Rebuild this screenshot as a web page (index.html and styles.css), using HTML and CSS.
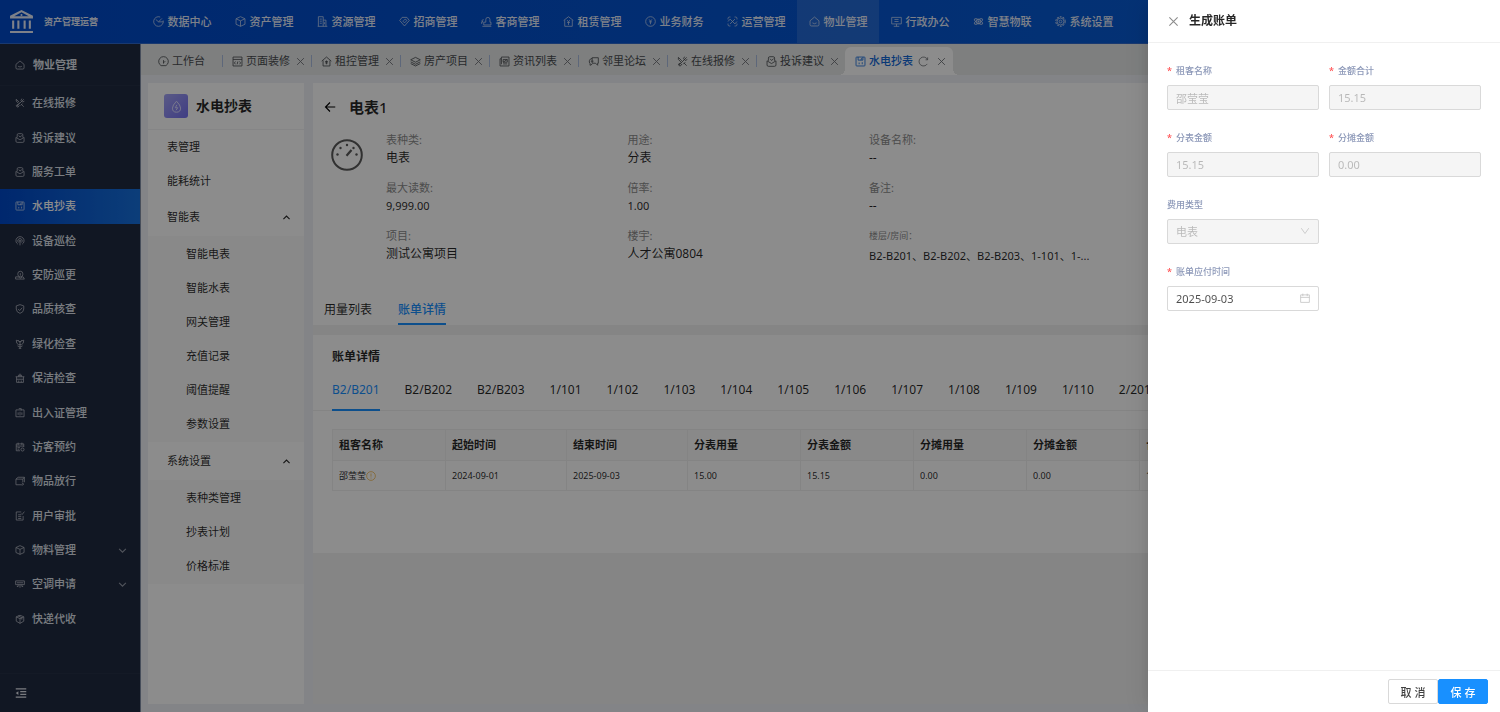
FILE: index.html
```html
<!DOCTYPE html>
<html lang="zh-CN">
<head>
    <meta charset="UTF-8">
    <meta name="viewport" content="width=device-width, initial-scale=1.0">
    <title>水电抄表</title>
    <link rel="stylesheet" href="styles.css">
</head>
<body>
    <!-- icon set -->
    <svg class="sprite" aria-hidden="true">
        <symbol id="i-data" viewBox="0 0 16 16"><path d="M10.500 1.500A7 7 0 1 0 14.800 6.500M8 8.500L4 5M8 8.500h7M8 8.500l5-5"/></symbol>
        <symbol id="i-cube" viewBox="0 0 16 16"><path d="M8 1l6.500 3v8L8 15l-6.500-3V4zM1.500 4L8 7l6.500-3M8 7v8"/></symbol>
        <symbol id="i-building" viewBox="0 0 16 16"><path d="M2 15V1h7v14M9 6h4v9M1 15h14M4 4.500h3M4 7.500h3M4 10.500h3M11 9v3"/></symbol>
        <symbol id="i-tag" viewBox="0 0 16 16"><path d="M4.500 2h7L15 6.500 8 14.500 1 6.500zM5 7l3 3 3.500-3.500L9 4.500 6.500 7"/></symbol>
        <symbol id="i-stamp" viewBox="0 0 16 16"><path d="M7 9V5a3 3 0 1 1 6 0v4h1.500v4H4V9zM2 15h13M4 5.500H3a1.500 1.500 0 0 0 0 3H1v3"/></symbol>
        <symbol id="i-rent" viewBox="0 0 16 16"><path d="M1 6.500L8 1l7 5.500M2.500 6v9h11V6M6 6l2 2.500L10 6M8 8.500V13M6 9.500h4"/></symbol>
        <symbol id="i-coin" viewBox="0 0 16 16"><circle cx="8" cy="8" r="7"/><path d="M6 5l2 2.500L10 5M8 7.500V12M6 8.500h4"/></symbol>
        <symbol id="i-ops" viewBox="0 0 16 16"><path d="M1.500 5V3.500a2 2 0 0 1 2-2H5M11 1.500h1.500a2 2 0 0 1 2 2V5M14.500 11v1.500a2 2 0 0 1-2 2H11M5 14.500H3.500a2 2 0 0 1-2-2V11M1.500 8l3-3.500L11.500 11.500l3-3.500M4.500 11.500l7-7"/></symbol>
        <symbol id="i-home" viewBox="0 0 16 16"><path d="M1.500 7L8 1.500 14.500 7v5.500a2 2 0 0 1-2 2h-9a2 2 0 0 1-2-2zM5 10q3 2.500 6 0"/></symbol>
        <symbol id="i-monitor" viewBox="0 0 16 16"><path d="M1 2h14v9.500H1zM8 11.500V15M4 15h8M5 5h6M5 8h6"/></symbol>
        <symbol id="i-atom" viewBox="0 0 16 16"><ellipse cx="8" cy="8" rx="7" ry="2.500" transform="rotate(30 8 8)"/><ellipse cx="8" cy="8" rx="7" ry="2.500" transform="rotate(150 8 8)"/><circle cx="8" cy="8" r="3.500"/><circle class="solid" cx="8" cy="8" r="1.500"/></symbol>
        <symbol id="i-gear" viewBox="0 0 16 16"><circle cx="8" cy="8" r="6.800" stroke-width="1.500" stroke-dasharray="2.800 1.500"/><circle cx="8" cy="8" r="5"/><circle cx="8" cy="8" r="2"/></symbol>
        <symbol id="i-tools" viewBox="0 0 16 16"><path d="M2 2l5 5M10 10l4 4M9 12l3-3M14 2L3 13M2 2v3l4 4M11 1l-1.500 3L12 6.500 15 5M5 10l-3 2 1 2 2 .5 2-3"/></symbol>
        <symbol id="i-mail" viewBox="0 0 16 16"><path d="M3.500 7V3a2 2 0 0 1 2-2h5a2 2 0 0 1 2 2v4M1.500 7v6a2 2 0 0 0 2 2h9a2 2 0 0 0 2-2V7L8 11zM6 4l2 2.500L11 4"/></symbol>
        <symbol id="i-meter" viewBox="0 0 16 16"><rect x="1.500" y="1.500" width="13" height="13" rx="1"/><path d="M4.500 1.500V6h7V1.500M8.500 6L10 3M6 9.500V12M10.500 9v3"/></symbol>
        <symbol id="i-device" viewBox="0 0 16 16"><path d="M4.500 13a6.500 6.500 0 1 1 7 0M8 8v7M6 10.500a3.500 3.500 0 1 1 4 0"/><circle cx="8" cy="7.500" r="1"/></symbol>
        <symbol id="i-guard" viewBox="0 0 16 16"><path d="M4.500 6a4 4 0 1 1 8 0v1a4 4 0 0 1-8 0zM8.500 5v4M1 11h4l3.500 2L12 11h1l2 3.500H1z"/></symbol>
        <symbol id="i-shield" viewBox="0 0 16 16"><path d="M8 1l6 2v5q0 5-6 7-6-2-6-7V3zM5 8l2.500 2.500L11.500 6"/></symbol>
        <symbol id="i-flower" viewBox="0 0 16 16"><path d="M2 2q3 0 6 3 3-3 6-3 0 6-3.500 7h-5Q2 8 2 2zM5 2l3 3 3-3M8 5v10M8 13l-4-2M8 13l4-2M6 15h4"/></symbol>
        <symbol id="i-clean" viewBox="0 0 16 16"><path d="M8 1v5M5.500 3.500h5V6M5.500 3.500V6M1 6h14M2.500 6v9h11V6M2.500 10h11M6 12v3M10 12v3"/></symbol>
        <symbol id="i-card" viewBox="0 0 16 16"><path d="M1.500 3h13v11h-13zM6 1h4v3M5 7v4M8 6v6M11 7v4"/></symbol>
        <symbol id="i-visit" viewBox="0 0 16 16"><path d="M8 14H2V3h12v5M2 6.500h12M5 1v4M11 1v4M4 9h4M4 11.500h3"/><circle cx="12" cy="12" r="2.500"/></symbol>
        <symbol id="i-goods" viewBox="0 0 16 16"><path d="M11 14H1.500V5h11v5M1.500 5L5 2h10v8M12.500 5L15 2M11 11l3 2-3 2"/></symbol>
        <symbol id="i-doc" viewBox="0 0 16 16"><path d="M10 1.500H2v13h11V8M5 6h5M5 9h5M5 12h5M10 4l1.500 1.500L15 1"/></symbol>
        <symbol id="i-ac" viewBox="0 0 16 16"><path d="M1 3h14v6H1zM3 6h10M5 9v3H3M11 9v3h2M8 9v5"/></symbol>
        <symbol id="i-parcel" viewBox="0 0 16 16"><path d="M8 2l6 2.500v7L8 15l-6-3.500v-7zM8 7.500V15M2 4.500l6 3 6-3M5 3l6 3v3"/></symbol>
        <symbol id="i-fold" viewBox="0 0 16 16"><path d="M1 2.500h14M7 6.200h8M7 9.800h8M1 13.500h14" stroke-width="1.500"/><path class="solid" d="M4.500 5.500v5L1 8z"/></symbol>
        <symbol id="i-dash" viewBox="0 0 16 16"><path d="M4.500 14a7 7 0 1 1 7 0zM8 11V6M8 10l2.500-2.500"/></symbol>
        <symbol id="i-page" viewBox="0 0 16 16"><path d="M1.500 1.500h13v13h-13zM1.500 5h13M5 8l-1.500 2L5 12M11 8l1.500 2-1.500 2M8.500 8l-1 4"/></symbol>
        <symbol id="i-house" viewBox="0 0 16 16"><path d="M1 7.500L8 1.500l7 6M3 6.500V14.500h10V6.500M6 8h4M8 6.500V12M6 10h4"/></symbol>
        <symbol id="i-layers" viewBox="0 0 16 16"><path d="M8 2l7 3.500L8 9 1 5.500zM1 8.500L8 12l7-3.500M1 11l7 3.500 7-3.500"/></symbol>
        <symbol id="i-news" viewBox="0 0 16 16"><path d="M3.500 1.500h11v13h-13V4h2zM3.500 4v8M6 5h6v4H6zM6 9l6-4M6 11.500h6"/></symbol>
        <symbol id="i-chat" viewBox="0 0 16 16"><path d="M6 2.500h9v8h-1v3l-3-3H6zM6 3.500a4.500 4.500 0 0 0-3 7.500v2.500l3-1.500M4 7.500h4"/></symbol>
        <symbol id="i-reload" viewBox="0 0 16 16"><path d="M13.500 11.500A6.500 6.500 0 1 1 14 5.500V2M14 5.500h-3"/></symbol>
        <symbol id="i-close" viewBox="0 0 16 16"><path d="M2 2l12 12M14 2L2 14"/></symbol>
        <symbol id="i-down" viewBox="0 0 16 16"><path d="M2 5l6 6 6-6"/></symbol>
        <symbol id="i-up" viewBox="0 0 16 16"><path d="M2.500 11L8 5.500l5.500 5.500"/></symbol>
    </svg>

    <div class="app">
        <header class="topbar">
            <div class="logo">
                <svg class="logo-img" viewBox="0 0 24 24"><path fill-rule="evenodd" d="M12 1l11 5.500V9H1V6.500zM12 3L5 7h14zM12 4.800a1 1 0 1 1 0 2 1 1 0 0 1 0-2zM3 11h2v8H3zM8 11h2v8H8zM14 11h2v8h-2zM19 11h2v8h-2zM1 21h22v2H1z"/></svg>
                <strong>资产管理运营</strong>
            </div>
            <nav class="topnav">
                <a href="#"><svg class="icon"><use href="#i-data"/></svg>数据中心</a>
                <a href="#"><svg class="icon"><use href="#i-cube"/></svg>资产管理</a>
                <a href="#"><svg class="icon"><use href="#i-building"/></svg>资源管理</a>
                <a href="#"><svg class="icon"><use href="#i-tag"/></svg>招商管理</a>
                <a href="#"><svg class="icon"><use href="#i-stamp"/></svg>客商管理</a>
                <a href="#"><svg class="icon"><use href="#i-rent"/></svg>租赁管理</a>
                <a href="#"><svg class="icon"><use href="#i-coin"/></svg>业务财务</a>
                <a href="#"><svg class="icon"><use href="#i-ops"/></svg>运营管理</a>
                <a href="#" class="active"><svg class="icon"><use href="#i-home"/></svg>物业管理</a>
                <a href="#"><svg class="icon"><use href="#i-monitor"/></svg>行政办公</a>
                <a href="#"><svg class="icon"><use href="#i-atom"/></svg>智慧物联</a>
                <a href="#"><svg class="icon"><use href="#i-gear"/></svg>系统设置</a>
            </nav>
        </header>

        <div class="layout">
            <aside class="sidebar">
                <div class="sidebar-title"><svg class="icon"><use href="#i-home"/></svg>物业管理</div>
                <nav class="sidebar-nav">
                    <a href="#"><svg class="icon"><use href="#i-tools"/></svg>在线报修</a>
                    <a href="#"><svg class="icon"><use href="#i-mail"/></svg>投诉建议</a>
                    <a href="#"><svg class="icon"><use href="#i-mail"/></svg>服务工单</a>
                    <a href="#" class="active"><svg class="icon"><use href="#i-meter"/></svg>水电抄表</a>
                    <a href="#"><svg class="icon"><use href="#i-device"/></svg>设备巡检</a>
                    <a href="#"><svg class="icon"><use href="#i-guard"/></svg>安防巡更</a>
                    <a href="#"><svg class="icon"><use href="#i-shield"/></svg>品质核查</a>
                    <a href="#"><svg class="icon"><use href="#i-flower"/></svg>绿化检查</a>
                    <a href="#"><svg class="icon"><use href="#i-clean"/></svg>保洁检查</a>
                    <a href="#"><svg class="icon"><use href="#i-card"/></svg>出入证管理</a>
                    <a href="#"><svg class="icon"><use href="#i-visit"/></svg>访客预约</a>
                    <a href="#"><svg class="icon"><use href="#i-goods"/></svg>物品放行</a>
                    <a href="#"><svg class="icon"><use href="#i-doc"/></svg>用户审批</a>
                    <a href="#"><svg class="icon"><use href="#i-cube"/></svg>物料管理<svg class="arrow"><use href="#i-down"/></svg></a>
                    <a href="#"><svg class="icon"><use href="#i-ac"/></svg>空调申请<svg class="arrow"><use href="#i-down"/></svg></a>
                    <a href="#"><svg class="icon"><use href="#i-parcel"/></svg>快递代收</a>
                </nav>
                <div class="sidebar-footer">
                    <button type="button" aria-label="收起菜单"><svg class="icon"><use href="#i-fold"/></svg></button>
                </div>
            </aside>

            <div class="page">
                <div class="tabbar">
                    <a href="#" class="tab home-tab"><svg class="icon"><use href="#i-dash"/></svg>工作台</a>
                    <a href="#" class="tab"><svg class="icon"><use href="#i-page"/></svg>页面装修<svg class="close"><use href="#i-close"/></svg></a>
                    <a href="#" class="tab"><svg class="icon"><use href="#i-house"/></svg>租控管理<svg class="close"><use href="#i-close"/></svg></a>
                    <a href="#" class="tab"><svg class="icon"><use href="#i-layers"/></svg>房产项目<svg class="close"><use href="#i-close"/></svg></a>
                    <a href="#" class="tab"><svg class="icon"><use href="#i-news"/></svg>资讯列表<svg class="close"><use href="#i-close"/></svg></a>
                    <a href="#" class="tab"><svg class="icon"><use href="#i-chat"/></svg>邻里论坛<svg class="close"><use href="#i-close"/></svg></a>
                    <a href="#" class="tab"><svg class="icon"><use href="#i-tools"/></svg>在线报修<svg class="close"><use href="#i-close"/></svg></a>
                    <a href="#" class="tab"><svg class="icon"><use href="#i-mail"/></svg>投诉建议<svg class="close"><use href="#i-close"/></svg></a>
                    <a href="#" class="tab active"><svg class="icon"><use href="#i-meter"/></svg>水电抄表<svg class="reload"><use href="#i-reload"/></svg><svg class="close"><use href="#i-close"/></svg></a>
                </div>

                <div class="content">
                    <aside class="submenu">
                        <div class="submenu-title">
                            <span class="badge"><svg viewBox="0 0 16 16"><path d="M8 1.500q5 5 5 8.500a5 5 0 0 1-10 0q0-3.500 5-8.500zM8.500 6l-2 3.500h3l-2 3"/></svg></span>
                            水电抄表
                        </div>
                        <a href="#">表管理</a>
                        <a href="#">能耗统计</a>
                        <a href="#" class="parent">智能表<svg class="arrow"><use href="#i-up"/></svg></a>
                        <div class="children">
                            <a href="#">智能电表</a>
                            <a href="#">智能水表</a>
                            <a href="#">网关管理</a>
                            <a href="#">充值记录</a>
                            <a href="#">阈值提醒</a>
                            <a href="#">参数设置</a>
                        </div>
                        <a href="#" class="parent">系统设置<svg class="arrow"><use href="#i-up"/></svg></a>
                        <div class="children">
                            <a href="#">表种类管理</a>
                            <a href="#">抄表计划</a>
                            <a href="#">价格标准</a>
                        </div>
                    </aside>

                    <main class="main">
                        <section class="panel detail">
                            <div class="detail-head">
                                <button type="button" aria-label="返回"><svg class="back" viewBox="0 0 16 16"><path d="M15 8H2M8 2L2 8l6 6"/></svg></button>
                                <h1>电表<span>1</span></h1>
                            </div>
                            <div class="detail-body">
                                <svg class="gauge" viewBox="0 0 32 32">
                                    <circle class="ring" cx="16" cy="16" r="14.800"/>
                                    <path class="needle" d="M15.500 16.800L20.500 11"/>
                                    <g class="dots"><circle cx="6.500" cy="15.500" r="1.200"/><circle cx="9.500" cy="9" r="1.200"/><circle cx="16" cy="6" r="1.200"/><circle cx="22.500" cy="9" r="1.200"/><circle cx="25.500" cy="15.500" r="1.200"/></g>
                                </svg>
                                <dl class="info">
                                    <div><dt>表种类:</dt><dd>电表</dd></div>
                                    <div><dt>最大读数:</dt><dd class="num">9,999.00</dd></div>
                                    <div><dt>项目:</dt><dd>测试公寓项目</dd></div>
                                    <div><dt>用途:</dt><dd>分表</dd></div>
                                    <div><dt>倍率:</dt><dd class="num">1.00</dd></div>
                                    <div><dt>楼宇:</dt><dd>人才公寓0804</dd></div>
                                    <div><dt>设备名称:</dt><dd>--</dd></div>
                                    <div><dt>备注:</dt><dd>--</dd></div>
                                    <div class="rooms"><dt>楼层/房间：</dt><dd>B2-B201、B2-B202、B2-B203、1-101、1-...</dd></div>
                                </dl>
                            </div>
                            <nav class="detail-tabs">
                                <a href="#">用量列表</a>
                                <a href="#" class="active">账单详情</a>
                            </nav>
                        </section>

                        <section class="panel bill">
                            <h2>账单详情</h2>
                            <nav class="room-tabs">
                                <a href="#" class="active">B2/B201</a>
                                <a href="#">B2/B202</a>
                                <a href="#">B2/B203</a>
                                <a href="#">1/101</a>
                                <a href="#">1/102</a>
                                <a href="#">1/103</a>
                                <a href="#">1/104</a>
                                <a href="#">1/105</a>
                                <a href="#">1/106</a>
                                <a href="#">1/107</a>
                                <a href="#">1/108</a>
                                <a href="#">1/109</a>
                                <a href="#">1/110</a>
                                <a href="#">2/201</a>
                            </nav>
                            <div class="table-wrap">
                                <table class="bill-table">
                                    <colgroup>
                                        <col class="col"><col class="col-date"><col class="col-date"><col class="col"><col class="col"><col class="col"><col class="col"><col>
                                    </colgroup>
                                    <thead>
                                        <tr><th>租客名称</th><th>起始时间</th><th>结束时间</th><th>分表用量</th><th>分表金额</th><th>分摊用量</th><th>分摊金额</th><th>合计金额</th></tr>
                                    </thead>
                                    <tbody>
                                        <tr>
                                            <td>邵莹莹<svg class="warn" viewBox="0 0 16 16"><circle cx="8" cy="8" r="7"/><path d="M8 4v5M8 10.500v1.500"/></svg></td>
                                            <td>2024-09-01</td><td>2025-09-03</td><td>15.00</td><td>15.15</td><td>0.00</td><td>0.00</td><td>15.15</td>
                                        </tr>
                                    </tbody>
                                </table>
                            </div>
                        </section>
                    </main>
                </div>
            </div>
        </div>
    </div>

    <div class="mask"></div>

    <form class="drawer" onsubmit="return false">
        <div class="drawer-header">
            <button type="button" class="drawer-close" aria-label="关闭"><svg><use href="#i-close"/></svg></button>
            <h2>生成账单</h2>
        </div>
        <div class="drawer-body">
            <div class="field">
                <label for="tenant" class="required">租客名称</label>
                <input type="text" id="tenant" value="邵莹莹" disabled>
            </div>
            <div class="field">
                <label for="total" class="required">金额合计</label>
                <input type="text" id="total" value="15.15" disabled>
            </div>
            <div class="field">
                <label for="sub" class="required">分表金额</label>
                <input type="text" id="sub" value="15.15" disabled>
            </div>
            <div class="field">
                <label for="share" class="required">分摊金额</label>
                <input type="text" id="share" value="0.00" disabled>
            </div>
            <div class="field full">
                <label for="type">费用类型</label>
                <div class="control">
                    <select id="type" disabled><option>电表</option></select>
                    <svg class="suffix" viewBox="0 0 16 16"><path d="M2 3.500l6 8.500 6-8.500"/></svg>
                </div>
            </div>
            <div class="field full">
                <label for="due" class="required">账单应付时间</label>
                <div class="control">
                    <input type="text" id="due" value="2025-09-03">
                    <svg class="suffix" viewBox="0 0 16 16"><path d="M1 3h14v12H1zM1 7h14M4.500 1v4M11.500 1v4"/></svg>
                </div>
            </div>
        </div>
        <div class="drawer-footer">
            <button type="button" class="btn">取 消</button>
            <button type="submit" class="btn btn-primary">保 存</button>
        </div>
    </form>
</body>
</html>
```

FILE: styles.css
```css
* {
    box-sizing: border-box;
}

body {
    margin: 0;
    overflow: hidden;
    font-family: "Noto Sans", "Noto Sans CJK SC", sans-serif;
    font-size: 11px;
    line-height: 16px;
    color: rgba(0, 0, 0, 0.85);
}

a {
    color: inherit;
    text-decoration: none;
}

h1, h2, dl, dd {
    margin: 0;
}

button {
    font-family: inherit;
    border: none;
    background: none;
    padding: 0;
    cursor: pointer;
}

svg {
    flex: none;
    fill: none;
    stroke: currentColor;
    stroke-width: 1.2;
}

.sprite {
    display: none;
}

.solid {
    fill: currentColor;
    stroke: none;
}

.icon {
    width: 11px;
    height: 11px;
}

.app {
    display: flex;
    flex-direction: column;
    height: 100vh;
    background-color: #eff1f6;
}

/* top bar */
.topbar {
    display: flex;
    flex: none;
    height: 44px;
    color: #e6ecfa;
    background: linear-gradient(90deg, #0049c8, #0a60d8);
    border-bottom: 1px solid #2f68cc;
}

.logo {
    display: flex;
    flex: none;
    align-items: center;
    gap: 10px;
    width: 141px;
    padding-left: 9px;
    font-size: 9px;
}

.logo-img {
    width: 25px;
    height: 25px;
    fill: currentColor;
    stroke: none;
}

.topnav {
    display: flex;
}

.topnav a {
    display: flex;
    align-items: center;
    justify-content: center;
    gap: 4px;
    width: 82px;
    font-weight: 500;
}

.topnav a.active {
    background-color: rgba(255, 255, 255, 0.12);
}

.topnav .icon {
    opacity: 0.8;
}

/* left menu */
.layout {
    display: flex;
    flex: 1;
    min-height: 0;
}

.sidebar {
    display: flex;
    flex: none;
    flex-direction: column;
    width: 141px;
    color: #dfe2ea;
    background-color: #202a40;
    border-right: 1px solid #828fa6;
}

.sidebar-title {
    display: flex;
    align-items: center;
    gap: 8px;
    height: 42px;
    padding-left: 15px;
    font-weight: bold;
    border-bottom: 1px solid #263046;
}

.sidebar-nav {
    display: flex;
    flex: 1;
    flex-direction: column;
    padding-bottom: 37px;
}

.sidebar-nav a {
    display: flex;
    flex: 1;
    align-items: center;
    gap: 7px;
    padding: 0 13px 0 15px;
    font-weight: 500;
}

.sidebar-nav a.active {
    color: #fff;
    background: linear-gradient(90deg, #0048c8, #1670dd);
}

.sidebar .icon {
    width: 10px;
    height: 10px;
    opacity: 0.8;
}

.arrow {
    width: 9px;
    height: 9px;
    margin-left: auto;
    stroke-width: 2;
}

.sidebar .arrow {
    opacity: 0.6;
}

.sidebar-footer {
    display: flex;
    align-items: center;
    height: 39px;
    padding-left: 15px;
    border-top: 1px solid #263046;
}

.sidebar-footer button {
    display: flex;
    color: inherit;
}

.sidebar-footer .icon {
    width: 12px;
    height: 12px;
    opacity: 1;
}

/* opened pages */
.page {
    display: flex;
    flex: 1;
    flex-direction: column;
    min-width: 0;
}

.tabbar {
    display: flex;
    flex: none;
    align-items: flex-end;
    height: 31px;
    background-color: #e5e8e8;
}

.tab {
    display: flex;
    align-items: center;
    gap: 3px;
    position: relative;
    height: 28px;
    padding: 0 6px 0 10px;
    color: #4a4c50;
}

.tab + .tab:not(.active)::before {
    content: "";
    position: absolute;
    left: 0;
    width: 1px;
    height: 12px;
    background-color: #a9bcdf;
}

.tab .close {
    width: 9px;
    height: 9px;
    margin-left: 3px;
    color: #707378;
    stroke-width: 1.6;
}

.home-tab {
    padding: 0 17px;
}

.tab.active {
    padding: 0 7px 0 10px;
    color: #1268d8;
    font-weight: 500;
    background-color: #fff;
    border-radius: 6px 6px 0 0;
}

.tab.active::before,
.tab.active::after {
    content: "";
    position: absolute;
    bottom: 0;
    width: 6px;
    height: 6px;
}

.tab.active::before {
    right: 100%;
    background: radial-gradient(circle at 0 0, transparent 6px, #fff 6px);
}

.tab.active::after {
    left: 100%;
    background: radial-gradient(circle at 100% 0, transparent 6px, #fff 6px);
}

.tab .reload {
    width: 11px;
    height: 11px;
    margin: 0 2px;
    color: #707378;
}

.content {
    display: flex;
    flex: 1;
    gap: 9px;
    min-height: 0;
    padding: 8px 8px 8px 7px;
}

/* second level menu */
.submenu {
    flex: none;
    width: 156px;
    background-color: #fff;
}

.submenu-title {
    display: flex;
    align-items: center;
    gap: 8px;
    height: 47px;
    padding-left: 16px;
    font-size: 14px;
    font-weight: bold;
    border-bottom: 1px solid #f2f2f4;
}

.badge {
    display: flex;
    align-items: center;
    justify-content: center;
    width: 24px;
    height: 24px;
    color: #dcdcff;
    background: linear-gradient(135deg, #a4a4f4, #7470f0);
    border-radius: 3px;
}

.badge svg {
    width: 13px;
    height: 13px;
}

.submenu a {
    display: flex;
    align-items: center;
    height: 34px;
    padding: 0 13px 0 19px;
}

.submenu a.parent {
    height: 38px;
}

.children {
    padding: 1px 0;
    background-color: #fafafa;
}

.children a {
    padding-left: 38px;
}

/* meter detail */
.main {
    flex: 1;
    min-width: 0;
    background-color: #f3f3f3;
}

.panel {
    background-color: #fff;
}

.detail-head {
    display: flex;
    align-items: center;
    gap: 13px;
    height: 48px;
    padding-left: 11px;
}

.detail-head button {
    display: flex;
}

.detail-head h1 {
    font-size: 15px;
}

.detail-head h1 span {
    font-weight: 500;
}

.back {
    width: 12px;
    height: 12px;
    stroke-width: 1.5;
}

.detail-body {
    display: flex;
    gap: 23px;
    padding: 0 140px 0 18px;
}

.gauge {
    width: 32px;
    height: 32px;
    margin-top: 8px;
    color: #595959;
}

.gauge .ring {
    stroke-width: 2;
}

.gauge .needle {
    stroke-width: 2.2;
}

.gauge .dots {
    fill: currentColor;
    stroke: none;
}

.info {
    display: grid;
    flex: 1;
    grid-template-columns: repeat(4, minmax(0, 1fr));
    grid-template-rows: repeat(3, 48px);
    grid-auto-flow: column;
}

.info dt {
    line-height: 18px;
    color: #8c8c8c;
}

.info dd {
    font-size: 12px;
    line-height: 18px;
}

.info .num {
    font-size: 11px;
}

.info .rooms dt {
    font-size: 9px;
}

.info .rooms dd {
    font-size: 11px;
    line-height: 22px;
    white-space: nowrap;
}

.detail-tabs {
    display: flex;
    gap: 26px;
    margin-top: 20px;
    padding-left: 11px;
    font-size: 12px;
}

.detail-tabs a {
    height: 30px;
    line-height: 30px;
    border-bottom: 2px solid transparent;
}

.detail-tabs a.active,
.room-tabs a.active {
    color: #1890ff;
    border-color: #1890ff;
}

.detail-tabs a.active {
    font-weight: 500;
}

/* bills */
.bill {
    margin-top: 10px;
    padding-bottom: 62px;
}

.bill h2 {
    padding: 12px 19px 0;
    font-size: 12px;
    line-height: 20px;
}

.room-tabs {
    display: flex;
    gap: 25px;
    padding: 0 19px;
    font-size: 12px;
    border-bottom: 1px solid #f0f0f0;
}

.room-tabs a {
    height: 44px;
    margin-bottom: -1px;
    line-height: 46px;
    border-bottom: 2px solid transparent;
}

.table-wrap {
    padding: 18px 19px 0;
}

.bill-table {
    width: 100%;
    table-layout: fixed;
    border-collapse: collapse;
}

.bill-table .col {
    width: 113px;
}

.bill-table .col-date {
    width: 121px;
}

.bill-table th,
.bill-table td {
    height: 30px;
    padding: 0 6px;
    text-align: left;
    border: 1px solid #f0f0f0;
}

.bill-table th {
    height: 31px;
    font-size: 11px;
    background-color: #fafafa;
}

.bill-table td {
    font-size: 9px;
}

.warn {
    width: 10px;
    height: 10px;
    color: #f0b548;
    vertical-align: -2px;
}

/* drawer */
.mask {
    position: fixed;
    inset: 0;
    background-color: rgba(0, 0, 0, 0.45);
}

.drawer {
    position: fixed;
    top: 0;
    right: 0;
    bottom: 0;
    display: flex;
    flex-direction: column;
    width: 352px;
    background-color: #fff;
    box-shadow: -5px 0 13px -6px rgba(0, 0, 0, 0.1), -7px 0 22px rgba(0, 0, 0, 0.08);
}

.drawer-header {
    display: flex;
    align-items: center;
    gap: 10px;
    height: 43px;
    padding-left: 20px;
    border-bottom: 1px solid #f0f0f0;
}

.drawer-header h2 {
    font-size: 12px;
    font-weight: bold;
}

.drawer-close {
    display: flex;
    color: #8c8c8c;
}

.drawer-close svg {
    width: 11px;
    height: 11px;
    stroke-width: 1.6;
}

.drawer-body {
    display: grid;
    flex: 1;
    grid-template-columns: 1fr 1fr;
    align-content: start;
    gap: 21px 10px;
    padding: 21px 19px;
}

.field.full {
    grid-column: 1 / -1;
    width: calc(50% - 5px);
}

.field label {
    display: block;
    margin-bottom: 7px;
    font-size: 9px;
    font-weight: 500;
    line-height: 14px;
    color: #8c98b8;
}

.field .required::before {
    content: "*";
    margin-right: 4px;
    color: #ff4d4f;
}

.field input,
.field select {
    display: block;
    width: 100%;
    height: 25px;
    padding: 0 8px;
    font-family: inherit;
    font-size: 11px;
    color: rgba(0, 0, 0, 0.7);
    background-color: #fff;
    border: 1px solid #d9d9d9;
    border-radius: 2px;
    appearance: none;
}

.field input:disabled,
.field select:disabled {
    color: rgba(0, 0, 0, 0.25);
    background-color: #f5f5f5;
    opacity: 1;
}

.control {
    position: relative;
}

.suffix {
    position: absolute;
    top: 7px;
    right: 9px;
    width: 10px;
    height: 10px;
    color: #bfbfbf;
}

.drawer-footer {
    display: flex;
    justify-content: flex-end;
    padding: 8px 12px;
    border-top: 1px solid #f0f0f0;
}

.btn {
    width: 50px;
    height: 25px;
    font-size: 11px;
    font-weight: 500;
    color: rgba(0, 0, 0, 0.75);
    background-color: #fff;
    border: 1px solid #d9d9d9;
    border-radius: 2px;
}

.btn-primary {
    color: #fff;
    background-color: #1890ff;
    border-color: #1890ff;
}
```
